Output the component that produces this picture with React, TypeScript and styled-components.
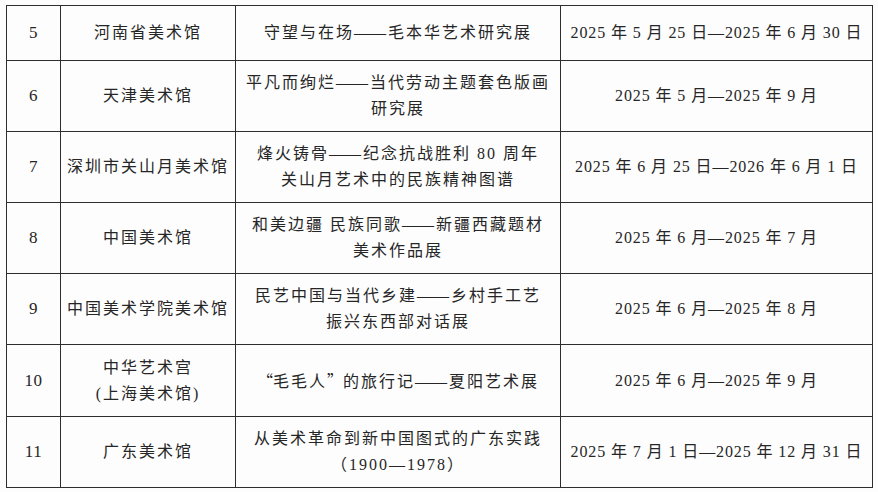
import styled, { createGlobalStyle } from "styled-components";

const GlobalStyle = createGlobalStyle`
  html, body {
    margin: 0;
    padding: 0;
    background: #fdfdfd;
  }
  body {
    font-family: "Liberation Serif", "Noto Sans CJK SC", serif;
    color: #262626;
  }
`;

const Page = styled.div`
  width: 878px;
  height: 492px;
  padding: 5px 0 0 6px;
  box-sizing: border-box;
`;

const Table = styled.div`
  width: 867px;
  border-top: 1px solid #2e2e2e;
  border-left: 1px solid #2e2e2e;
  box-sizing: border-box;
`;

const Row = styled.div<{ $h: number }>`
  display: grid;
  grid-template-columns: 54px 175px 325px 312px;
  height: ${(p) => p.$h}px;
  border-bottom: 1px solid #2e2e2e;
  box-sizing: border-box;
`;

const Cell = styled.div<{ $kind?: "num" | "date" }>`
  display: flex;
  flex-direction: column;
  align-items: center;
  justify-content: center;
  border-right: 1px solid #2e2e2e;
  font-size: ${(p) => (p.$kind === "num" ? 17 : 16)}px;
  line-height: 26px;
  letter-spacing: ${(p) => (p.$kind === "date" ? 0.9 : p.$kind === "num" ? 0.5 : 2)}px;
  white-space: nowrap;
`;

const Dash = styled.span`
  letter-spacing: 0;
  margin-right: 2px;
`;

const Quote = styled.span`
  font-family: "Noto Sans CJK SC", sans-serif;
  letter-spacing: 0;
`;

type Item = {
  no: string;
  museum: string[];
  title: string[];
  date: string;
  h: number;
};

const rows: Item[] = [
  {
    no: "5",
    museum: ["河南省美术馆"],
    title: ["守望与在场——毛本华艺术研究展"],
    date: "2025 年 5 月 25 日—2025 年 6 月 30 日",
    h: 55,
  },
  {
    no: "6",
    museum: ["天津美术馆"],
    title: ["平凡而绚烂——当代劳动主题套色版画", "研究展"],
    date: "2025 年 5 月—2025 年 9 月",
    h: 71,
  },
  {
    no: "7",
    museum: ["深圳市关山月美术馆"],
    title: ["烽火铸骨——纪念抗战胜利 80 周年", "关山月艺术中的民族精神图谱"],
    date: "2025 年 6 月 25 日—2026 年 6 月 1 日",
    h: 71,
  },
  {
    no: "8",
    museum: ["中国美术馆"],
    title: ["和美边疆 民族同歌——新疆西藏题材", "美术作品展"],
    date: "2025 年 6 月—2025 年 7 月",
    h: 71,
  },
  {
    no: "9",
    museum: ["中国美术学院美术馆"],
    title: ["民艺中国与当代乡建——乡村手工艺", "振兴东西部对话展"],
    date: "2025 年 6 月—2025 年 8 月",
    h: 71,
  },
  {
    no: "10",
    museum: ["中华艺术宫", "(上海美术馆)"],
    title: ["“毛毛人”的旅行记——夏阳艺术展"],
    date: "2025 年 6 月—2025 年 9 月",
    h: 72,
  },
  {
    no: "11",
    museum: ["广东美术馆"],
    title: ["从美术革命到新中国图式的广东实践", "（1900—1978）"],
    date: "2025 年 7 月 1 日—2025 年 12 月 31 日",
    h: 71,
  },
];

// split a line so the double dash stays one solid rule and the quotes are full width
const renderLine = (text: string) =>
  text.split(/(——|[“”])/).map((part, i) => {
    if (part === "——") return <Dash key={i}>——</Dash>;
    if (part === "“" || part === "”") return <Quote key={i}>{part}</Quote>;
    return <span key={i}>{part}</span>;
  });

const Lines = ({ lines }: { lines: string[] }) => (
  <>
    {lines.map((l, i) => (
      <div key={i}>{renderLine(l)}</div>
    ))}
  </>
);

function App() {
  return (
    <Page>
      <GlobalStyle />
      <Table>
        {rows.map((r) => (
          <Row key={r.no} $h={r.h}>
            <Cell $kind="num">{r.no}</Cell>
            <Cell>
              <Lines lines={r.museum} />
            </Cell>
            <Cell>
              <Lines lines={r.title} />
            </Cell>
            <Cell $kind="date">{r.date}</Cell>
          </Row>
        ))}
      </Table>
    </Page>
  );
}

export default App;
